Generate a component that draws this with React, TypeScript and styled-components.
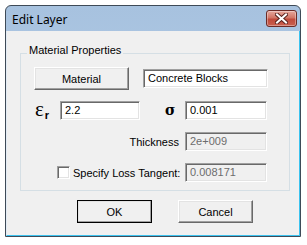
import styled, { createGlobalStyle } from 'styled-components'

const GlobalStyle = createGlobalStyle`
  html, body {
    margin: 0;
    background: #ffffff;
  }
  * {
    box-sizing: border-box;
  }
`

const DialogWindow = styled.div`
  margin: 5px 0 0 5px;
  width: 296px;
  height: 232px;
  border: 1px solid #3e4a57;
  border-radius: 6px 6px 0 0;
  background: linear-gradient(to bottom, #a7c2df 0%, #b9d1ea 100%);
  display: flex;
  flex-direction: column;
  overflow: hidden;
`

const TitleBar = styled.div`
  height: 25px;
  display: flex;
  align-items: flex-start;
  justify-content: space-between;
  padding: 0 3px 0 6px;
`

const TitleText = styled.span`
  font-family: 'Noto Sans', 'Open Sans', sans-serif;
  font-size: 12px;
  line-height: 16px;
  margin-top: 6px;
  color: #000000;
`

const CloseButton = styled.div`
  width: 31px;
  height: 17px;
  margin-top: 4px;
  border: 1px solid #6b2b26;
  border-radius: 3px;
  background: linear-gradient(to bottom, #e6a89d 0%, #d27565 45%, #c04a3b 55%, #c9604f 100%);
  box-shadow: inset 0 0 0 1px rgba(255, 255, 255, 0.35);
  display: flex;
  align-items: center;
  justify-content: center;
`

const ClientArea = styled.div`
  flex: 1;
  background: #f0f0f0;
  border-left: 1px solid #e3ecf5;
  border-right: 1px solid #3cc3ef;
  border-bottom: 1px solid #3cc3ef;
  padding: 13px 0 0 13px;
  font-family: 'Liberation Sans', Arial, sans-serif;
  font-size: 11px;
  color: #000000;
`

const GroupBox = styled.fieldset`
  margin: 0;
  width: 270px;
  min-width: 0;
  border: 1px solid #d5dfe5;
  border-radius: 0;
  padding: 5px 0 8px 0;
  display: flex;
  flex-direction: column;
`

const GroupLegend = styled.legend`
  margin-left: 6px;
  padding: 0 2px 5px 2px;
  font-size: 11px;
  line-height: 13px;
`

const Row = styled.div<{ $top?: number; $indent?: number }>`
  display: flex;
  align-items: center;
  margin-top: ${(p) => p.$top ?? 0}px;
  padding-left: ${(p) => p.$indent ?? 0}px;
`

const PushButton = styled.button<{ $width: number; $default?: boolean }>`
  width: ${(p) => p.$width}px;
  height: 23px;
  padding: 0;
  font-family: 'Liberation Sans', Arial, sans-serif;
  font-size: 11px;
  color: #000000;
  background: #f0f0f0;
  border: 1px solid;
  border-color: #ffffff #696969 #696969 #ffffff;
  box-shadow: inset -1px -1px 0 #a0a0a0, inset 1px 1px 0 #e3e3e3;
  outline: ${(p) => (p.$default ? '1px solid #000000' : 'none')};
  outline-offset: -1px;
  border-radius: 0;
`

const EditBox = styled.div<{ $width: number; $disabled?: boolean }>`
  width: ${(p) => p.$width}px;
  height: 19px;
  border: 1px solid;
  border-color: #a0a0a0 #ffffff #ffffff #a0a0a0;
  box-shadow: inset 1px 1px 0 #696969, inset -1px -1px 0 #e3e3e3;
  background: ${(p) => (p.$disabled ? '#f0f0f0' : '#ffffff')};
  color: ${(p) => (p.$disabled ? '#6d6d6d' : '#000000')};
  padding: 0 0 0 4px;
  line-height: 17px;
  white-space: nowrap;
  overflow: hidden;
`

const SymbolLabel = styled.div<{ $width: number; $offset?: number }>`
  width: ${(p) => p.$width}px;
  margin-left: ${(p) => p.$offset ?? 0}px;
  display: flex;
  align-items: baseline;
  height: 19px;
`

const Epsilon = styled.span`
  font-family: 'Liberation Serif', 'Times New Roman', serif;
  font-size: 21px;
  line-height: 17px;
`

const SubR = styled.span`
  font-family: 'Liberation Sans', Arial, sans-serif;
  font-weight: bold;
  font-size: 11px;
  position: relative;
  top: 3px;
  margin-left: 1px;
`

const Sigma = styled.span`
  font-family: 'DejaVu Serif', serif;
  font-weight: bold;
  font-size: 14px;
  line-height: 19px;
`

const LabelCell = styled.div<{ $align?: 'left' | 'right' }>`
  width: 164px;
  display: flex;
  align-items: center;
  justify-content: ${(p) => (p.$align === 'left' ? 'flex-start' : 'flex-end')};
  padding-right: ${(p) => (p.$align === 'left' ? 0 : 6)}px;
  padding-left: ${(p) => (p.$align === 'left' ? 36 : 0)}px;
  white-space: nowrap;
  color: #000000;
`

const CheckBox = styled.span`
  width: 13px;
  height: 13px;
  border: 1px solid;
  border-color: #a0a0a0 #ffffff #ffffff #a0a0a0;
  box-shadow: inset 1px 1px 0 #696969, inset -1px -1px 0 #e3e3e3;
  background: #ffffff;
  margin-right: 3px;
  flex: none;
`

const ButtonRow = styled.div`
  display: flex;
  gap: 26px;
  margin-top: 9px;
  padding-left: 57px;
`

const CloseGlyph = () => (
  <svg width="13" height="11" viewBox="0 0 13 11">
    <path d="M2 1.5 L11 9.5 M11 1.5 L2 9.5" stroke="#5a2520" strokeWidth="4" strokeLinecap="square" />
    <path d="M2 1.5 L11 9.5 M11 1.5 L2 9.5" stroke="#ffffff" strokeWidth="2" strokeLinecap="square" />
  </svg>
)

export default function App() {
  return (
    <>
      <GlobalStyle />
      <DialogWindow>
        <TitleBar>
          <TitleText>Edit Layer</TitleText>
          <CloseButton>
            <CloseGlyph />
          </CloseButton>
        </TitleBar>
        <ClientArea>
          <GroupBox>
            <GroupLegend>Material Properties</GroupLegend>
            <Row $indent={13}>
              <PushButton $width={95}>Material</PushButton>
              <EditBox $width={125} style={{ marginLeft: 14 }}>
                Concrete Blocks
              </EditBox>
            </Row>
            <Row $top={11} $indent={14}>
              <SymbolLabel $width={25}>
                <Epsilon>ε</Epsilon>
                <SubR>r</SubR>
              </SymbolLabel>
              <EditBox $width={80}>2.2</EditBox>
              <SymbolLabel $width={20} $offset={25}>
                <Sigma>σ</Sigma>
              </SymbolLabel>
              <EditBox $width={82}>0.001</EditBox>
            </Row>
            <Row $top={12}>
              <LabelCell>Thickness</LabelCell>
              <EditBox $width={82} $disabled>
                2e+009
              </EditBox>
            </Row>
            <Row $top={12}>
              <LabelCell $align="left">
                <CheckBox />
                Specify Loss Tangent:
              </LabelCell>
              <EditBox $width={82} $disabled>
                0.008171
              </EditBox>
            </Row>
          </GroupBox>
          <ButtonRow>
            <PushButton $width={75} $default>
              OK
            </PushButton>
            <PushButton $width={75}>Cancel</PushButton>
          </ButtonRow>
        </ClientArea>
      </DialogWindow>
    </>
  )
}
